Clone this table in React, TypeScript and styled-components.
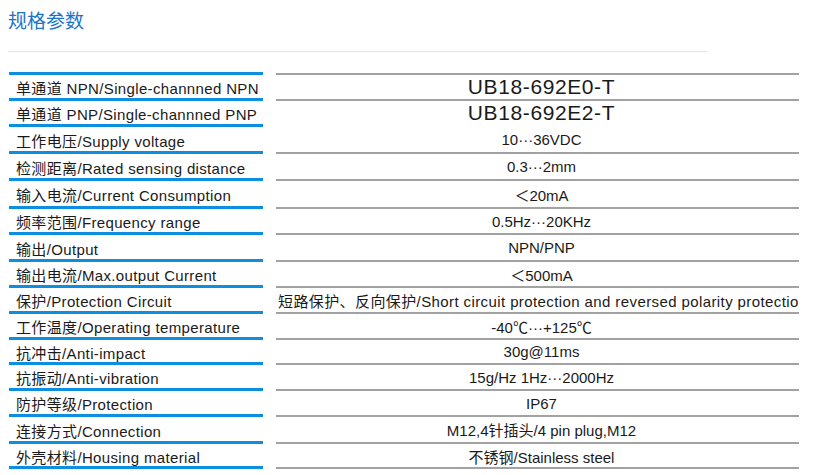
import React from "react";
import styled, { createGlobalStyle } from "styled-components";

const GlobalStyle = createGlobalStyle`
  html, body {
    margin: 0;
    padding: 0;
    background: #fff;
  }
  body {
    font-family: "Liberation Sans", "Noto Sans CJK SC", sans-serif;
    color: #1a1a1a;
  }
`;

const Page = styled.div`
  width: 813px;
  height: 475px;
  overflow: hidden;
  padding: 0 8px;
  box-sizing: border-box;
`;

const Title = styled.h2`
  margin: 6px 0 0;
  font-family: "Noto Sans CJK SC", sans-serif;
  font-size: 19px;
  line-height: 28px;
  font-weight: normal;
  color: #1c74c6;
`;

const Divider = styled.div`
  width: 700px;
  height: 1px;
  margin-top: 17px;
  background: #e6e6e6;
`;

const Table = styled.div`
  margin: 20px 0 0 1px;
  display: flex;
  flex-direction: column;
`;

const Row = styled.div<{ $h: number }>`
  display: grid;
  grid-template-columns: 254px 523px;
  column-gap: 13px;
  height: ${p => p.$h}px;
`;

const Label = styled.div<{ $last?: boolean }>`
  display: flex;
  align-items: center;
  padding: 2px 0 0 7px;
  border-top: 3px solid #0d8fe0;
  border-bottom: ${p => (p.$last ? "3px solid #0d8fe0" : "none")};
  font-size: 15px;
  letter-spacing: 0.35px;
  white-space: nowrap;
  overflow: hidden;
`;

const Value = styled.div<{ $big?: boolean; $start?: boolean; $noLine?: boolean; $last?: boolean }>`
  display: flex;
  align-items: center;
  justify-content: ${p => (p.$start ? "flex-start" : "center")};
  padding: 1px 0 0 ${p => (p.$start ? "2px" : "8px")};
  margin-top: 1px;
  border-top: 2px solid ${p => (p.$noLine ? "transparent" : "#a2a2a2")};
  border-bottom: ${p => (p.$last ? "2px solid #a2a2a2" : "none")};
  font-size: ${p => (p.$big ? "21px" : "15px")};
  letter-spacing: ${p => (p.$big ? "0.6px" : p.$start ? "0.4px" : "0")};
  white-space: nowrap;
  overflow: hidden;
`;

type Spec = {
  label: string;
  value: string;
  h: number;
  big?: boolean;
  start?: boolean;
  noLine?: boolean;
};

const specs: Spec[] = [
  { label: "单通道 NPN/Single-channned NPN", value: "UB18-692E0-T", h: 26, big: true },
  { label: "单通道 PNP/Single-channned PNP", value: "UB18-692E2-T", h: 26, big: true },
  { label: "工作电压/Supply voltage", value: "10···36VDC", h: 27, noLine: true },
  { label: "检测距离/Rated sensing distance", value: "0.3···2mm", h: 27 },
  { label: "输入电流/Current Consumption", value: "＜20mA", h: 28 },
  { label: "频率范围/Frequency range", value: "0.5Hz···20KHz", h: 26 },
  { label: "输出/Output", value: "NPN/PNP", h: 27 },
  { label: "输出电流/Max.output Current", value: "＜500mA", h: 26 },
  {
    label: "保护/Protection Circuit",
    value: "短路保护、反向保护/Short circuit protection and reversed polarity protection",
    h: 26,
    start: true,
  },
  { label: "工作温度/Operating temperature", value: "-40℃···+125℃", h: 26 },
  { label: "抗冲击/Anti-impact", value: "30g@11ms", h: 25 },
  { label: "抗振动/Anti-vibration", value: "15g/Hz 1Hz···2000Hz", h: 26 },
  { label: "防护等级/Protection", value: "IP67", h: 26 },
  { label: "连接方式/Connection", value: "M12,4针插头/4 pin plug,M12", h: 27 },
  { label: "外壳材料/Housing material", value: "不锈钢/Stainless steel", h: 25 },
];

export default function App() {
  return (
    <Page>
      <GlobalStyle />
      <Title>规格参数</Title>
      <Divider />
      <Table>
        {specs.map((s, i) => {
          const last = i === specs.length - 1;
          return (
            <Row key={s.label} $h={last ? s.h + 3 : s.h}>
              <Label $last={last}>{s.label}</Label>
              <Value $big={s.big} $start={s.start} $noLine={s.noLine} $last={last}>
                {s.value}
              </Value>
            </Row>
          );
        })}
      </Table>
    </Page>
  );
}
